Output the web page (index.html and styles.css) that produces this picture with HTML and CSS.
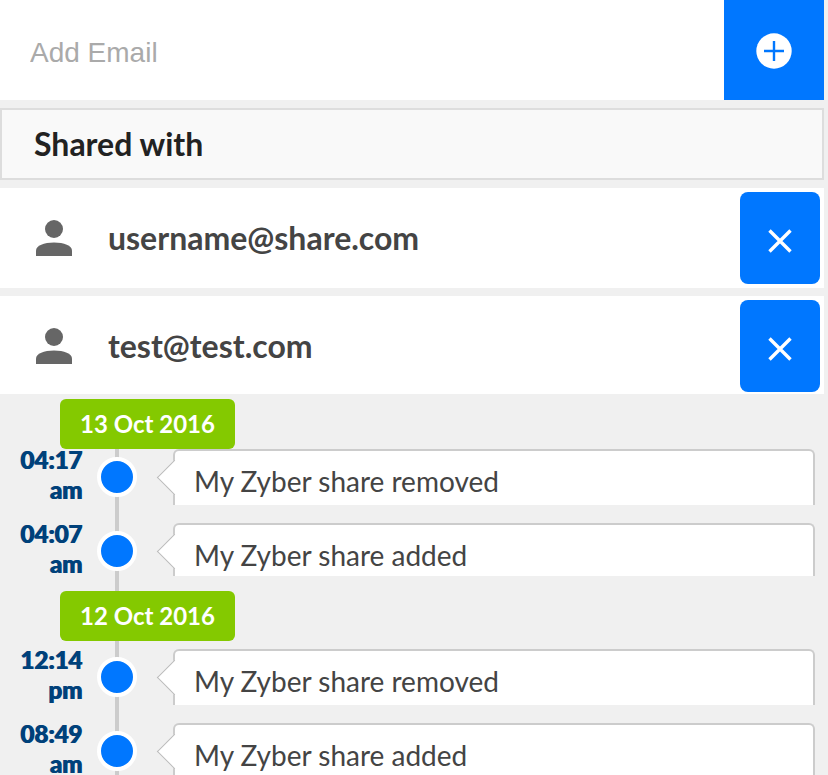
FILE: index.html
```html
<!DOCTYPE html>
<html lang="en">
<head>
<meta charset="utf-8">
<title>Share</title>
<meta name="viewport" content="width=device-width, initial-scale=1">
<link rel="stylesheet" href="styles.css">
</head>
<body>
<main class="page">
  <form class="add">
    <input class="add-input" type="email" placeholder="Add Email" aria-label="Add Email">
    <button class="add-button" type="button" aria-label="Add">
      <svg width="36" height="36" viewBox="0 0 36 36" aria-hidden="true"><circle cx="18" cy="18" r="17.7" fill="#fff"/><path d="M18 8v20M8 18h20" stroke="#0077ff" stroke-width="2.4" fill="none"/></svg>
    </button>
  </form>

  <h2 class="heading">Shared with</h2>

  <ul class="people">
    <li class="person">
      <svg class="avatar" width="36" height="36" viewBox="0 0 36 36" aria-hidden="true"><circle cx="18" cy="9" r="9"/><path d="M0 36v-5.500C0 25.500 8 22.500 18 22.500S36 25.500 36 30.500V36z"/></svg>
      <span class="email">username@share.com</span>
      <button class="remove" type="button" aria-label="Remove username@share.com">
        <svg width="24" height="24" viewBox="0 0 24 24" aria-hidden="true"><path d="M1.500 1.500l21 21M22.500 1.500l-21 21"/></svg>
      </button>
    </li>
    <li class="person">
      <svg class="avatar" width="36" height="36" viewBox="0 0 36 36" aria-hidden="true"><circle cx="18" cy="9" r="9"/><path d="M0 36v-5.500C0 25.500 8 22.500 18 22.500S36 25.500 36 30.500V36z"/></svg>
      <span class="email">test@test.com</span>
      <button class="remove" type="button" aria-label="Remove test@test.com">
        <svg width="24" height="24" viewBox="0 0 24 24" aria-hidden="true"><path d="M1.500 1.500l21 21M22.500 1.500l-21 21"/></svg>
      </button>
    </li>
  </ul>

  <section class="timeline">
    <div class="day">
      <h3 class="date">13 Oct 2016</h3>
      <ol class="events">
        <li class="event"><time class="time">04:17 am</time><span class="dot"></span><p class="bubble">My Zyber share removed</p></li>
        <li class="event"><time class="time">04:07 am</time><span class="dot"></span><p class="bubble">My Zyber share added</p></li>
      </ol>
    </div>
    <div class="day">
      <h3 class="date">12 Oct 2016</h3>
      <ol class="events">
        <li class="event"><time class="time">12:14 pm</time><span class="dot"></span><p class="bubble">My Zyber share removed</p></li>
        <li class="event"><time class="time">08:49 am</time><span class="dot"></span><p class="bubble">My Zyber share added</p></li>
      </ol>
    </div>
  </section>
</main>
</body>
</html>
```
FILE: styles.css
```css
* { box-sizing: border-box; }

body {
  margin: 0;
  height: 100vh;
  overflow: hidden;
  background: #f0f0f0;
  color: #444;
  font-family: Lato, "Liberation Sans", sans-serif;
}

h2, h3, p, ul, ol { margin: 0; padding: 0; list-style: none; }

button {
  display: flex;
  align-items: center;
  justify-content: center;
  padding: 0;
  border: 0;
  background: #0077ff;
}

.page { padding-right: 4px; }

.add { display: flex; height: 100px; background: #fff; }

.add-input {
  flex: 1;
  min-width: 0;
  padding: 6px 30px 0;
  border: 0;
  outline: 0;
  background: transparent;
  font: 28px "Liberation Sans", sans-serif;
}
.add-input::placeholder { color: #aaa; opacity: 1; }

.add-button { width: 100px; padding-top: 2px; }

.heading {
  margin: 8px 0;
  padding: 14px 32px;
  border: 2px solid #ddd;
  background: #f9f9f9;
  color: #222;
  font-size: 32px;
  line-height: 40px;
}

.people { display: grid; gap: 8px; }

.person {
  display: flex;
  align-items: center;
  height: 100px;
  padding: 4px 4px 4px 36px;
  background: #fff;
}
.person:last-child { height: 98px; padding-bottom: 2px; }

.avatar { fill: #666; }

.email {
  flex: 1;
  margin-left: 36px;
  font-size: 32px;
  font-weight: 700;
  line-height: 40px;
}

.remove { width: 80px; height: 92px; padding-top: 6px; border-radius: 8px; }
.remove path { fill: none; stroke: #fff; stroke-width: 3.4; }

.timeline { position: relative; padding-top: 5px; }
.timeline::before {
  content: "";
  position: absolute;
  top: 5px;
  bottom: 0;
  left: 115px;
  width: 4px;
  background: #ccc;
}

.day { position: relative; }
.day + .day .events { padding-top: 8px; }

.date {
  width: max-content;
  margin-left: 60px;
  padding: 10px 20px;
  border-radius: 6px;
  background: #84c900;
  color: #fff;
  font-size: 24px;
  line-height: 30px;
}

.event {
  display: grid;
  grid-template-columns: 82px 40px 1fr;
  column-gap: 15px;
  align-items: start;
  height: 74px;
  padding-right: 9px;
}
.event:last-child { height: 68px; }

.time {
  padding-left: 16px;
  color: #00417a;
  font-size: 24px;
  font-weight: 900;
  line-height: 30px;
  text-align: right;
  text-shadow: 1px 0 #00417a;
  margin-top: -4px;
}

.dot {
  width: 40px;
  height: 40px;
  margin-top: 8px;
  border: 4px solid #fff;
  border-radius: 50%;
  background: #0077ff;
}

.bubble {
  position: relative;
  height: 56px;
  margin-left: 21px;
  padding: 12px 19px 0;
  border: 2px solid #ccc;
  border-bottom: 0;
  border-radius: 6px 6px 0 0;
  background: #fff;
  font-size: 28px;
  line-height: 36px;
}
.event:last-child .bubble { height: 53px; }
.day:last-child .event:last-child .bubble { height: 56px; }

.bubble::before {
  content: "";
  position: absolute;
  top: 14px;
  left: -13px;
  width: 24px;
  height: 24px;
  border: 1px solid #bbb;
  border-width: 0 0 1px 1px;
  background: #fff;
  transform: rotate(45deg);
}
```
